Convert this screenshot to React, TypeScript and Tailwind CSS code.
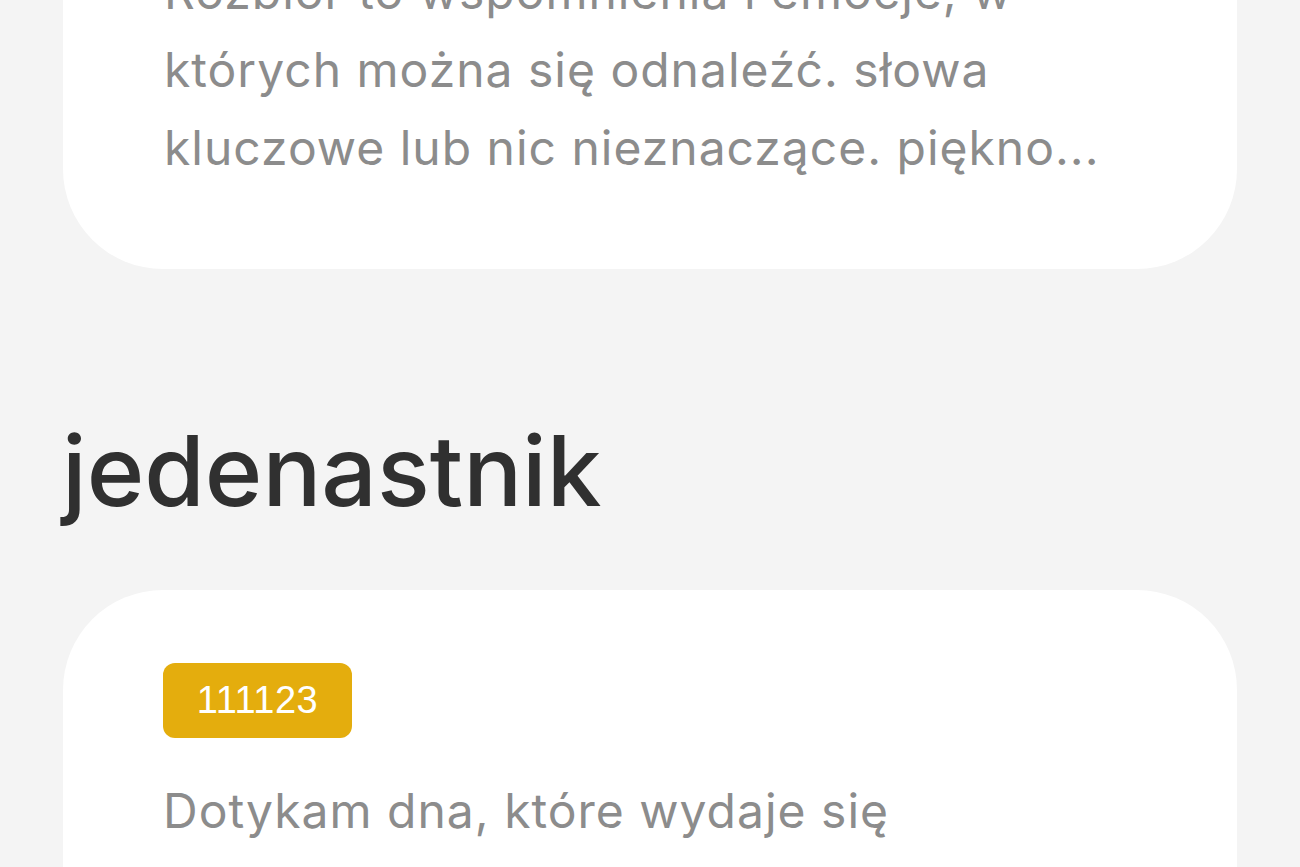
export default function App() {
  return (
    <div
      className="h-[867px] w-[1300px] overflow-hidden bg-[#f4f4f4]"
      style={{ fontFamily: "Inter, 'Noto Sans', sans-serif" }}
    >
      <div className="mt-[-126px] flex flex-col px-[63px]">
        <div className="rounded-[100px] bg-white pb-[82px] pl-[101px] pr-[40px] pt-[79px]">
          <p className="text-[48px] leading-[78px] tracking-[1px] text-[#8c8c8c]">
            Rozbiór to wspomnienia i emocje, w
            <br />
            których można się odnaleźć. słowa
            <br />
            kluczowe lub nic nieznaczące. piękno...
          </p>
        </div>
        <h2 className="mt-[153px] ml-[-1px] text-[98px] font-medium leading-[98px] text-[#303030]">
          jedenastnik
        </h2>
        <div className="mt-[70px] rounded-[100px] bg-white pb-[80px] pl-[100px] pr-[40px] pt-[73px]">
          <span className="inline-flex h-[75px] w-[189px] items-center justify-center rounded-[12px] bg-[#e4ad0d] font-['Liberation_Sans',Arial,sans-serif] text-[38px] tracking-[0.5px] text-white">
            111123
          </span>
          <p className="mt-[34px] text-[48px] leading-[78px] tracking-[1px] text-[#8c8c8c]">
            Dotykam dna, które wydaje się
            <br />
            bezdenne, a jednak nie sięgam dalej
          </p>
        </div>
      </div>
    </div>
  );
}
